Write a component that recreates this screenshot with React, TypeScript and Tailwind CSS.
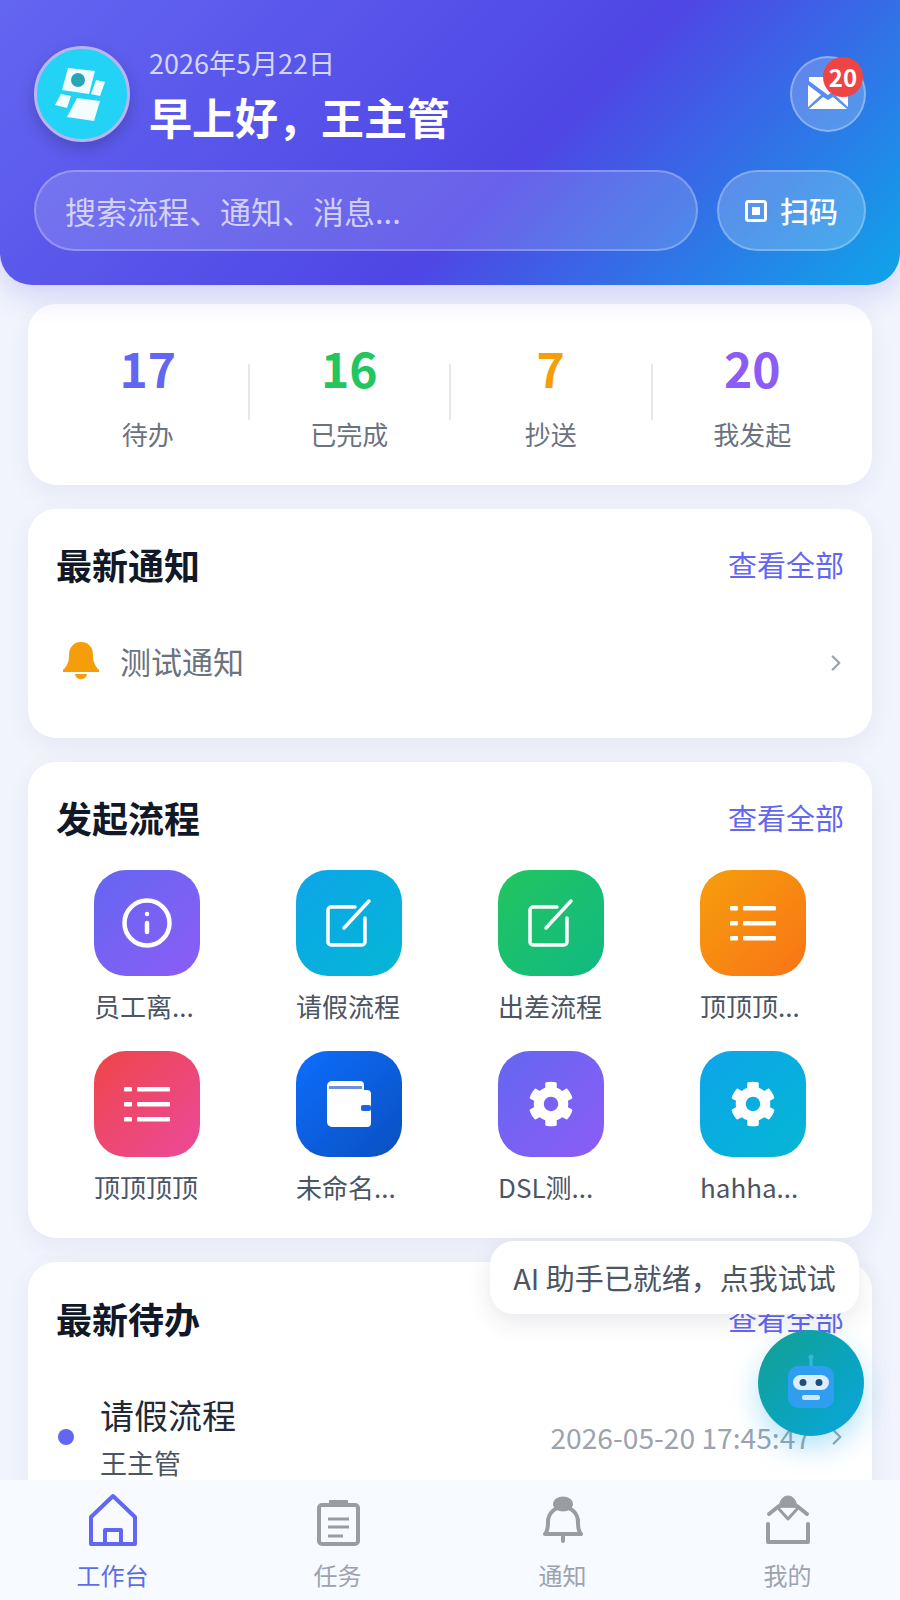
import React from "react";
import { ChevronRight, Info } from "lucide-react";
import { FaCog } from "react-icons/fa";

function WalletIcon() {
  return (
    <svg width="50" height="50" viewBox="0 0 50 50">
      <path d="M3 7a5 5 0 0 1 5-5h28a4 4 0 0 1 4 4v5h3a4 4 0 0 1 4 4v29a4 4 0 0 1-4 4H8a5 5 0 0 1-5-5z" fill="#fff" />
      <rect x="5" y="7" width="33" height="3" fill="#6d8fe0" />
      <rect x="37" y="26" width="10" height="6" rx="2" fill="#1565e0" />
    </svg>
  );
}

function PenIcon() {
  return (
    <svg width="50" height="50" viewBox="0 0 50 50" fill="none" stroke="#fff" strokeWidth="3.500" strokeLinecap="round" strokeLinejoin="round">
      <path d="M31 9H7a3 3 0 0 0-3 3v32a3 3 0 0 0 3 3h31a3 3 0 0 0 3-3V20" />
      <path d="M20 30 45 3" />
    </svg>
  );
}

function ListIcon() {
  return (
    <svg width="48" height="40" viewBox="0 0 48 40" fill="#fff">
      <rect x="1" y="3" width="8" height="4.500" rx="1" />
      <rect x="14" y="3" width="33" height="4.500" rx="1" />
      <rect x="1" y="18" width="8" height="4.500" rx="1" />
      <rect x="14" y="18" width="33" height="4.500" rx="1" />
      <rect x="1" y="33" width="8" height="4.500" rx="1" />
      <rect x="14" y="33" width="33" height="4.500" rx="1" />
    </svg>
  );
}

const flows = [
  { label: "员工离...", bg: "bg-gradient-to-br from-[#6366f1] to-[#8b5cf6]", icon: <Info size={54} strokeWidth={2} color="#fff" /> },
  { label: "请假流程", bg: "bg-gradient-to-br from-[#0ea5e9] to-[#06b6d4]", icon: <PenIcon /> },
  { label: "出差流程", bg: "bg-gradient-to-br from-[#22c55e] to-[#10b981]", icon: <PenIcon /> },
  { label: "顶顶顶...", bg: "bg-gradient-to-br from-[#f59e0b] to-[#f97316]", icon: <ListIcon /> },
  { label: "顶顶顶顶", bg: "bg-gradient-to-br from-[#ef4444] to-[#ec4899]", icon: <ListIcon /> },
  { label: "未命名...", bg: "bg-gradient-to-br from-[#0d6efd] to-[#0a4fc0]", icon: <WalletIcon /> },
  { label: "DSL测...", bg: "bg-gradient-to-br from-[#6366f1] to-[#8b5cf6]", icon: <FaCog size={46} color="#fff" /> },
  { label: "hahha...", bg: "bg-gradient-to-br from-[#0ea5e9] to-[#06b6d4]", icon: <FaCog size={46} color="#fff" /> },
];

const stats = [
  { value: "17", label: "待办", color: "text-[#6366f1]" },
  { value: "16", label: "已完成", color: "text-[#22c55e]" },
  { value: "7", label: "抄送", color: "text-[#f59e0b]" },
  { value: "20", label: "我发起", color: "text-[#8b5cf6]" },
];

function CardHeader({ title }: { title: string }) {
  return (
    <div className="flex h-[50px] items-center justify-between">
      <span className="text-[36px] font-bold leading-[50px] text-[#111827]">{title}</span>
      <span className="text-[29px] leading-[50px] text-[#6366f1]">查看全部</span>
    </div>
  );
}

function HomeIcon() {
  return (
    <svg width="56" height="56" viewBox="0 0 56 56" fill="none" stroke="#6366f1" strokeWidth="4" strokeLinejoin="round">
      <path d="M28 4 6 25v27h44V25z" />
      <path d="M20 52V38h16v14" />
    </svg>
  );
}
function TaskIcon() {
  return (
    <svg width="56" height="56" viewBox="0 0 56 56" fill="none" stroke="#9a9ca3" strokeWidth="4" strokeLinejoin="round">
      <rect x="9" y="13" width="39" height="39" rx="3" />
      <rect x="20" y="9" width="17" height="5" fill="#9a9ca3" strokeWidth="2" />
      <path d="M18 27h21M18 35h21M18 44h15" strokeWidth="3" />
    </svg>
  );
}
function BellOutlineIcon() {
  return (
    <svg width="56" height="56" viewBox="0 0 56 56" fill="none" stroke="#9a9ca3" strokeWidth="4" strokeLinejoin="round" strokeLinecap="round">
      <ellipse cx="28" cy="12" rx="8" ry="5.500" fill="#9a9ca3" />
      <path d="M10 42c2-2 3-6 3-12 0-9 7-15 15-15s15 6 15 15c0 6 1 10 3 12z" />
      <path d="M28 43v6" />
    </svg>
  );
}
function MineIcon() {
  return (
    <svg width="56" height="56" viewBox="0 0 56 56" fill="none" stroke="#9a9ca3" strokeWidth="4" strokeLinejoin="round" strokeLinecap="round">
      <path d="M19 15c1-8 5-11 9-11s8 3 9 11z" fill="#9a9ca3" strokeWidth="1" />
      <path d="M9 22 19 14M47 22 37 14" />
      <path d="M19 17 28 27 37 17" strokeWidth="3" />
      <path d="M8 32v18h40V32" />
    </svg>
  );
}

const navItems = [
  { label: "工作台", icon: <HomeIcon />, color: "text-[#5b6ee8]" },
  { label: "任务", icon: <TaskIcon />, color: "text-[#9ca3af]" },
  { label: "通知", icon: <BellOutlineIcon />, color: "text-[#9ca3af]" },
  { label: "我的", icon: <MineIcon />, color: "text-[#9ca3af]" },
];

export default function App() {
  return (
    <div className="relative flex h-[1600px] w-[900px] flex-col overflow-hidden bg-[#f1f4fc] font-['Noto_Sans_CJK_SC','Noto_Sans',sans-serif]">
      <div className="flex min-h-0 flex-1 flex-col overflow-hidden">
        <header className="relative z-10 h-[285px] shrink-0 rounded-b-[32px] bg-[linear-gradient(135deg,#6366f1_0%,#4f46e5_58%,#0ea5e9_100%)] px-[34px] pt-[47px] shadow-[0_10px_30px_rgba(79,70,229,0.2)]">
          <div className="flex h-[94px] items-center">
            <div className="flex h-[96px] w-[96px] shrink-0 items-center justify-center rounded-full border-[3px] border-[#b9b5f5] bg-[#22d3f5] shadow-[0_6px_16px_rgba(0,0,0,0.2)]">
              <svg width="56" height="56" viewBox="0 0 56 56">
                <path d="M14 2 41 5 35 28 8 24z" fill="#fff" fillOpacity="0.95" />
                <circle cx="24" cy="14" r="7" fill="#2aa5b5" />
                <path d="M42 14 51 16 46 30 37 28z" fill="#fff" fillOpacity="0.95" />
                <path d="M7 28 17 30 13 42 1 39z" fill="#fff" fillOpacity="0.95" />
                <path d="M23 32 46 35 40 55 13 51z" fill="#fff" fillOpacity="0.95" />
              </svg>
            </div>
            <div className="ml-[19px] flex flex-col">
              <span className="text-[27px] leading-[36px] text-white/75">2026年5月22日</span>
              <span className="mt-[7px] text-[43px] font-bold leading-[56px] text-white">早上好，王主管</span>
            </div>
            <div className="relative ml-auto mb-[1px] flex h-[76px] w-[76px] items-center justify-center rounded-full border-2 border-white/30 bg-white/20">
              <svg width="42" height="36" viewBox="0 0 42 36" className="mt-[-2px]">
                <path d="M2 2h38v4L21 20 2 6z" fill="#fff" />
                <path d="M1 10l13 10L1 32zM41 10 28 20l13 12zM16 22l5 3 5-3 14 12H2z" fill="#fff" />
              </svg>
              <span className="absolute right-[1px] top-[-1px] flex h-[40px] w-[40px] items-center justify-center rounded-full bg-[#ef4444] text-[24px] font-bold leading-none text-white">
                20
              </span>
            </div>
          </div>
          <div className="mt-[29px] flex gap-[19px]">
            <div className="flex h-[81px] flex-1 items-center rounded-full border-2 border-white/25 bg-white/15 pl-[29px]">
              <span className="text-[31px] leading-none text-white/70">搜索流程、通知、消息...</span>
            </div>
            <div className="flex h-[81px] w-[149px] items-center justify-center gap-[13px] rounded-full border-2 border-white/25 bg-white/20">
              <svg width="22" height="22" viewBox="0 0 22 22">
                <rect x="1.500" y="1.500" width="19" height="19" rx="2" fill="none" stroke="#fff" strokeWidth="3" />
                <rect x="7" y="7" width="8" height="8" fill="#fff" />
              </svg>
              <span className="text-[29px] font-medium leading-none text-white">扫码</span>
            </div>
          </div>
        </header>

        <main className="flex flex-col gap-[24px] px-[28px] pt-[19px]">
          <section className="flex shrink-0 items-center rounded-[28px] bg-white px-[20px] pb-[33px] pt-[33px] shadow-[0_8px_24px_rgba(80,90,140,0.07)]">
            {stats.map((s, i) => (
              <React.Fragment key={s.label}>
                <div className="flex flex-1 flex-col items-center">
                  <span className={`text-[48px] font-bold leading-[60px] ${s.color}`}>{s.value}</span>
                  <span className="mt-[19px] text-[26px] leading-[36px] text-[#6b7280]">{s.label}</span>
                </div>
                {i < 3 && <div className="mb-[6px] h-[56px] w-[2px] shrink-0 bg-[#e5e7eb]" />}
              </React.Fragment>
            ))}
          </section>

          <section className="shrink-0 rounded-[28px] bg-white px-[28px] pb-[28px] pt-[30px] shadow-[0_8px_24px_rgba(80,90,140,0.07)]">
            <CardHeader title="最新通知" />
            <div className="mt-[21px] flex h-[100px] items-center">
              <svg width="40" height="40" viewBox="0 0 40 40" className="ml-[5px]">
                <path d="M20 2c-8 0-12 6-12 13 0 7-2 11-6 15v2h36v-2c-4-4-6-8-6-15 0-7-4-13-12-13z" fill="#f59e0b" />
                <path d="M14 34h12c-1 7-11 7-12 0z" fill="#f59e0b" />
              </svg>
              <span className="ml-[19px] text-[31px] leading-none text-[#6b7280]">测试通知</span>
              <ChevronRight size={26} strokeWidth={2.2} className="ml-auto mr-[-5px] mt-[6px] text-[#9ca3af]" />
            </div>
          </section>

          <section className="shrink-0 rounded-[28px] bg-white px-[28px] pb-[33px] pt-[30px] shadow-[0_8px_24px_rgba(80,90,140,0.07)]">
            <CardHeader title="发起流程" />
            <div className="mt-[28px] grid grid-cols-4 gap-x-[20px] gap-y-[27px]">
              {flows.map((f) => (
                <div key={f.label} className="flex flex-col items-center">
                  <div className={`flex h-[106px] w-[106px] items-center justify-center rounded-[32px] ${f.bg}`}>{f.icon}</div>
                  <span className="mt-[12px] w-[106px] whitespace-nowrap text-[26px] leading-[36px] text-[#4b5563]">{f.label}</span>
                </div>
              ))}
            </div>
          </section>

          <section className="shrink-0 rounded-[28px] bg-white px-[28px] pb-[29px] pt-[31px] shadow-[0_8px_24px_rgba(80,90,140,0.07)]">
            <CardHeader title="最新待办" />
            <div className="mt-[50px] flex items-center">
              <span className="ml-[2px] h-[16px] w-[16px] rounded-full bg-[#6366f1]" />
              <div className="ml-[26px] flex flex-col">
                <span className="text-[34px] leading-[44px] text-[#1f2937]">请假流程</span>
                <span className="mt-[8px] text-[27px] leading-[36px] text-[#4b5563]">王主管</span>
              </div>
              <span className="ml-auto text-[28.200px] leading-none text-[#9ca3af]">2026-05-20 17:45:47</span>
              <ChevronRight size={26} strokeWidth={2.2} className="ml-[13px] mr-[-6px] text-[#9ca3af]" />
            </div>
          </section>
        </main>
      </div>

      <nav className="relative z-10 grid h-[120px] shrink-0 grid-cols-4 bg-[#f7faff]">
        {navItems.map((n) => (
          <div key={n.label} className="flex flex-col items-center pt-[12px]">
            {n.icon}
            <span className={`mt-[11px] text-[24px] leading-[32px] ${n.color}`}>{n.label}</span>
          </div>
        ))}
      </nav>

      <div className="absolute left-[490px] top-[1241px] z-20 flex h-[73px] w-[369px] items-center justify-center rounded-[24px] bg-white shadow-[0_8px_24px_rgba(31,41,55,0.1)]">
        <span className="whitespace-nowrap text-[29px] leading-none text-[#4b5563]">AI 助手已就绪，点我试试</span>
      </div>
      <div className="absolute left-[758px] top-[1330px] z-20 flex h-[106px] w-[106px] items-center justify-center rounded-full bg-gradient-to-br from-[#14a090] to-[#0ea5e0] shadow-[0_12px_28px_rgba(14,165,233,0.3)]">
        <svg width="56" height="60" viewBox="0 0 56 60">
          <path d="M28 3v10" stroke="#38b6d8" strokeWidth="3" />
          <circle cx="28" cy="4" r="2.500" fill="#38b6d8" />
          <rect x="5" y="13" width="46" height="42" rx="10" fill="#2f9df0" />
          <rect x="10" y="22" width="36" height="15" rx="7.500" fill="#dbeeff" />
          <circle cx="20" cy="29.500" r="3.500" fill="#1d4f7a" />
          <circle cx="36" cy="29.500" r="3.500" fill="#1d4f7a" />
          <rect x="19" y="42" width="18" height="5" rx="2" fill="#cfe6fb" />
        </svg>
      </div>
    </div>
  );
}
